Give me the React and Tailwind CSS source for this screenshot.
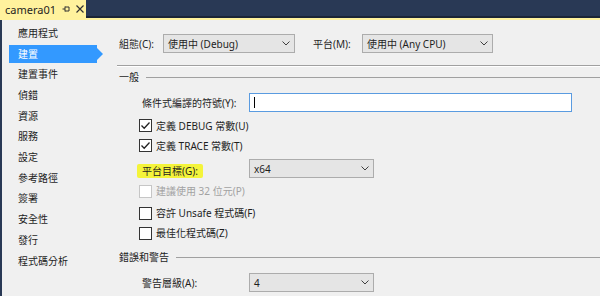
import React from "react";

const FONT = "font-['Noto_Sans','Noto_Sans_CJK_TC',sans-serif]";

function Chevron() {
  return (
    <svg width="8" height="5" viewBox="0 0 8 5" className="shrink-0">
      <path d="M0.5 0.5 L4 4 L7.5 0.5" fill="none" stroke="#404040" strokeWidth="1" />
    </svg>
  );
}

function Select({ value, w }) {
  return (
    <div
      className={`${w} h-[19px] flex items-center justify-between bg-[#e5e5e5] border border-[#acacac] pl-[4px] pr-[4px]`}
    >
      <span className="text-[10px] leading-none text-[#1e1e1e]">{value}</span>
      <Chevron />
    </div>
  );
}

function Check({ checked, disabled, label }) {
  return (
    <div className="h-[20px] flex items-center pl-[22px] gap-[4px]">
      <div
        className={`w-[13px] h-[13px] border flex items-center justify-center bg-white ${
          disabled ? "border-[#c6c6c6]" : "border-[#333333]"
        }`}
      >
        {checked && (
          <svg width="11" height="11" viewBox="0 0 11 11">
            <path d="M1.5 5.5 L4.2 8.3 L9.5 2.5" fill="none" stroke="#222" strokeWidth="1.3" />
          </svg>
        )}
      </div>
      <span className={`text-[10px] leading-none ${disabled ? "text-[#a2a2a2]" : "text-[#1e1e1e]"}`}>
        {label}
      </span>
    </div>
  );
}

function GroupHeader({ title, className = "" }) {
  return (
    <div className={`h-[16px] flex items-center gap-[7px] pl-[2px] ${className}`}>
      <span className="text-[10px] leading-none text-[#1e1e1e] whitespace-nowrap">{title}</span>
      <div className="flex-1 h-[1px] bg-[#a0a0a0]" />
    </div>
  );
}

const navItems = [
  "應用程式",
  "建置",
  "建置事件",
  "偵錯",
  "資源",
  "服務",
  "設定",
  "參考路徑",
  "簽署",
  "安全性",
  "發行",
  "程式碼分析",
];

export default function App() {
  return (
    <div className={`w-[600px] h-[296px] overflow-hidden flex flex-col bg-[#f0f0f0] ${FONT}`}>
      {/* header */}
      <div className="h-[18px] flex shrink-0">
        <div className="w-[86px] shrink-0 h-full bg-[#fff29d] flex items-center pl-[5px] pr-[4px]">
          <span className="text-[11px] leading-none text-[#1e1e1e]">camera01</span>
          <span className="ml-[6px] flex items-center">
            <svg width="8" height="8" viewBox="0 0 8 8">
              <path d="M0.5 4 H3 M3 1.5 V6.5 M3 2 H7 M3 6 H7 M7 2 V6" fill="none" stroke="#333" strokeWidth="1" />
            </svg>
          </span>
          <span className="ml-[6px] flex items-center">
            <svg width="8" height="8" viewBox="0 0 8 8">
              <path d="M0.5 0.5 L7.5 7.5 M7.5 0.5 L0.5 7.5" fill="none" stroke="#333" strokeWidth="1.2" />
            </svg>
          </span>
        </div>
        <div className="flex-1 h-full bg-[#293955] border-b-[2px] border-[#1b2536]" />
      </div>
      <div className="h-[2px] bg-[#fff29d] shrink-0" />

      {/* body */}
      <div className="flex-1 flex border-l-[2px] border-[#293955]">
        {/* nav */}
        <div className="w-[111px] shrink-0 pt-[2.6px] pl-[7px]">
          {navItems.map((t, i) => (
            <div key={t} className="h-[20.7px] flex items-center">
              {i === 1 ? (
                <div className="relative w-[88px] h-[18px] bg-[#3399ff] flex items-center pl-[9px]">
                  <span className="text-[10px] leading-none text-white">{t}</span>
                  <div className="absolute right-[-6px] top-[3px] w-0 h-0 border-y-[6px] border-y-transparent border-l-[6px] border-l-[#3399ff]" />
                </div>
              ) : (
                <span className="pl-[9px] text-[10px] leading-none text-[#1e1e1e]">{t}</span>
              )}
            </div>
          ))}
        </div>

        {/* content */}
        <div className="flex-1 flex flex-col pl-[4px]">
          <div className="mt-[14px] h-[19px] flex items-center">
            <span className="w-[46px] pl-[2px] text-[10px] leading-none text-[#1e1e1e]">組態(C):</span>
            <Select value="使用中 (Debug)" w="w-[132px]" />
            <span className="ml-[18px] w-[49px] text-[10px] leading-none text-[#1e1e1e]">平台(M):</span>
            <Select value="使用中 (Any CPU)" w="w-[131px]" />
          </div>

          <div className="mt-[12px] h-[1px] bg-[#a0a0a0]" />
          <div className="h-[1px] bg-white" />

          <GroupHeader title="一般" className="mt-[2px]" />

          <div className="mt-[8px] h-[19px] flex items-center">
            <span className="w-[132px] pl-[25px] text-[10px] leading-none text-[#1e1e1e] whitespace-nowrap">
              條件式編譯的符號(Y):
            </span>
            <div className="w-[323px] h-[19px] bg-white border border-[#5a9be0] flex items-center pl-[4px]">
              <div className="w-[1px] h-[11px] bg-black" />
            </div>
          </div>

          <div className="mt-[3.5px]">
            <Check checked label="定義 DEBUG 常數(U)" />
            <Check checked label="定義 TRACE 常數(T)" />
          </div>

          <div className="mt-[3.5px] h-[19px] flex items-center">
            <div className="w-[132px] pl-[20px]">
              <span className="inline-block bg-[#f4f43a] px-[5px] py-[2px] rounded-[2px] text-[10px] leading-none text-[#1e1e1e]">
                平台目標(G):
              </span>
            </div>
            <Select value="x64" w="w-[125px]" />
          </div>

          <div className="mt-[3px]">
            <Check disabled label="建議使用 32 位元(P)" />
          </div>
          <div className="mt-[2px]">
            <Check label="容許 Unsafe 程式碼(F)" />
            <Check label="最佳化程式碼(Z)" />
          </div>

          <GroupHeader title="錯誤和警告" className="mt-[6px]" />

          <div className="mt-[8px] h-[19px] flex items-center">
            <span className="w-[132px] pl-[25px] text-[10px] leading-none text-[#1e1e1e]">警告層級(A):</span>
            <Select value="4" w="w-[125px]" />
          </div>
        </div>
      </div>
    </div>
  );
}
